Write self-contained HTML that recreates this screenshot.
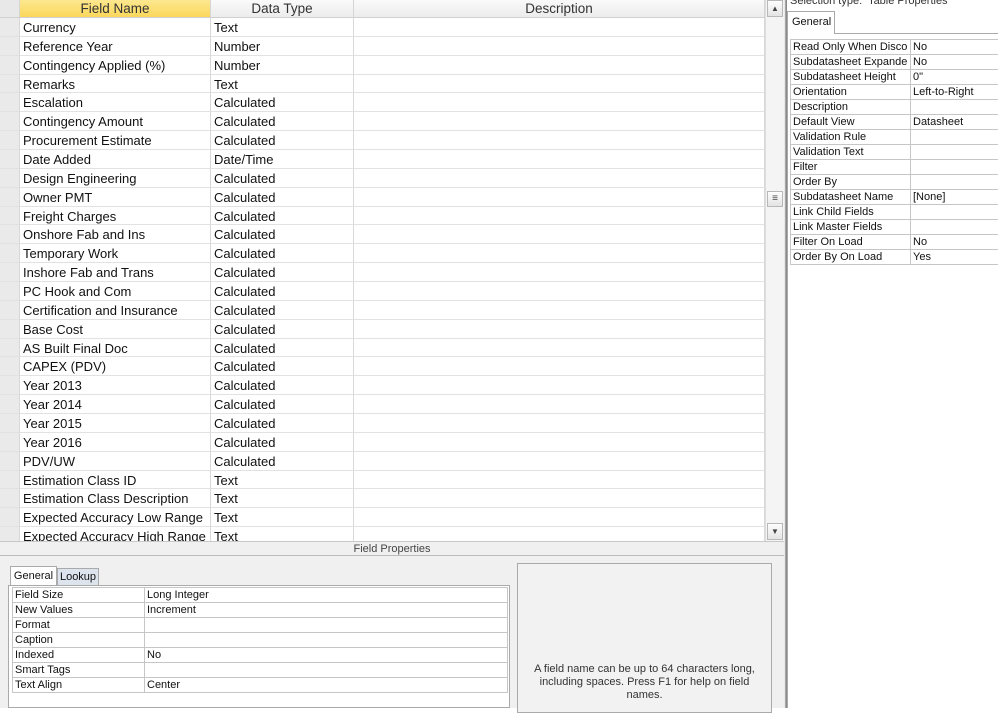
<!DOCTYPE html>
<html><head><meta charset="utf-8"><style>
*{margin:0;padding:0;box-sizing:border-box}
body{width:998px;height:708px;overflow:hidden;background:#fff;font-family:"Liberation Sans",sans-serif;position:relative;color:#111}
.a{position:absolute}
.grid{left:0;top:0;width:765px;height:541px;overflow:hidden}
.hdr{height:18px;display:flex;font-size:13.5px;color:#333;border-bottom:1px solid #d0d0d0}
.hdr div{text-align:center;line-height:18px;background:linear-gradient(#fafafa,#ececec);border-right:1px solid #d5d5d5}
.row{height:18.86px;display:flex;font-size:13px;line-height:20px}
.row div{border-right:1px solid #d8d8d8;border-bottom:1px solid #e2e2e2;padding-left:3px;white-space:nowrap;overflow:hidden}
.c0{width:20px;background:#eaeaea;padding:0!important}
.c1{width:191px}.c2{width:143px}.c3{width:411px}
.sb{left:765px;top:0;width:19px;height:541px;background:#f4f4f4;border-left:1px solid #ddd}
.btn{position:absolute;left:1px;width:16px;height:17px;background:linear-gradient(#fdfdfd,#e4e4e4);border:1px solid #b8b8b8;font-size:8px;text-align:center;line-height:15px;color:#444}
.sep{left:784px;top:0;width:3px;height:708px;background:#a8a8a8;border-left:1px solid #e8e8e8;border-right:1px solid #8a8a8a}
.pt td{border:1px solid #c6c6c6;font-size:11px;height:15px;line-height:14px;padding-left:2px;white-space:nowrap;overflow:hidden}
.pt{border-collapse:collapse;table-layout:fixed}
</style></head><body>
<div class="a grid">
<div class="hdr"><div style="width:20px;background:#e8e8e8"></div><div style="width:191px;background:linear-gradient(#fde88f,#fbd75b);color:#333">Field Name</div><div style="width:143px">Data Type</div><div style="width:411px">Description</div></div>
<div class="row"><div class="c0"></div><div class="c1">Currency</div><div class="c2">Text</div><div class="c3"></div></div>
<div class="row"><div class="c0"></div><div class="c1">Reference Year</div><div class="c2">Number</div><div class="c3"></div></div>
<div class="row"><div class="c0"></div><div class="c1">Contingency Applied (%)</div><div class="c2">Number</div><div class="c3"></div></div>
<div class="row"><div class="c0"></div><div class="c1">Remarks</div><div class="c2">Text</div><div class="c3"></div></div>
<div class="row"><div class="c0"></div><div class="c1">Escalation</div><div class="c2">Calculated</div><div class="c3"></div></div>
<div class="row"><div class="c0"></div><div class="c1">Contingency Amount</div><div class="c2">Calculated</div><div class="c3"></div></div>
<div class="row"><div class="c0"></div><div class="c1">Procurement Estimate</div><div class="c2">Calculated</div><div class="c3"></div></div>
<div class="row"><div class="c0"></div><div class="c1">Date Added</div><div class="c2">Date/Time</div><div class="c3"></div></div>
<div class="row"><div class="c0"></div><div class="c1">Design Engineering</div><div class="c2">Calculated</div><div class="c3"></div></div>
<div class="row"><div class="c0"></div><div class="c1">Owner PMT</div><div class="c2">Calculated</div><div class="c3"></div></div>
<div class="row"><div class="c0"></div><div class="c1">Freight Charges</div><div class="c2">Calculated</div><div class="c3"></div></div>
<div class="row"><div class="c0"></div><div class="c1">Onshore Fab and Ins</div><div class="c2">Calculated</div><div class="c3"></div></div>
<div class="row"><div class="c0"></div><div class="c1">Temporary Work</div><div class="c2">Calculated</div><div class="c3"></div></div>
<div class="row"><div class="c0"></div><div class="c1">Inshore Fab and Trans</div><div class="c2">Calculated</div><div class="c3"></div></div>
<div class="row"><div class="c0"></div><div class="c1">PC Hook and Com</div><div class="c2">Calculated</div><div class="c3"></div></div>
<div class="row"><div class="c0"></div><div class="c1">Certification and Insurance</div><div class="c2">Calculated</div><div class="c3"></div></div>
<div class="row"><div class="c0"></div><div class="c1">Base Cost</div><div class="c2">Calculated</div><div class="c3"></div></div>
<div class="row"><div class="c0"></div><div class="c1">AS Built Final Doc</div><div class="c2">Calculated</div><div class="c3"></div></div>
<div class="row"><div class="c0"></div><div class="c1">CAPEX (PDV)</div><div class="c2">Calculated</div><div class="c3"></div></div>
<div class="row"><div class="c0"></div><div class="c1">Year 2013</div><div class="c2">Calculated</div><div class="c3"></div></div>
<div class="row"><div class="c0"></div><div class="c1">Year 2014</div><div class="c2">Calculated</div><div class="c3"></div></div>
<div class="row"><div class="c0"></div><div class="c1">Year 2015</div><div class="c2">Calculated</div><div class="c3"></div></div>
<div class="row"><div class="c0"></div><div class="c1">Year 2016</div><div class="c2">Calculated</div><div class="c3"></div></div>
<div class="row"><div class="c0"></div><div class="c1">PDV/UW</div><div class="c2">Calculated</div><div class="c3"></div></div>
<div class="row"><div class="c0"></div><div class="c1">Estimation Class ID</div><div class="c2">Text</div><div class="c3"></div></div>
<div class="row"><div class="c0"></div><div class="c1">Estimation Class Description</div><div class="c2">Text</div><div class="c3"></div></div>
<div class="row"><div class="c0"></div><div class="c1">Expected Accuracy Low Range</div><div class="c2">Text</div><div class="c3"></div></div>
<div class="row"><div class="c0"></div><div class="c1">Expected Accuracy High Range</div><div class="c2">Text</div><div class="c3"></div></div>
</div>
<div class="a sb"><div class="btn" style="top:0">&#9650;</div><div class="btn" style="top:191px;height:16px;line-height:13px;font-size:10px">&#8801;</div><div class="btn" style="top:523px">&#9660;</div></div>
<div class="a" style="left:0;top:541px;width:784px;height:167px;background:#f0f0f0;border-top:1px solid #c8c8c8"></div>
<div class="a" style="left:0;top:541px;width:784px;height:15px;font-size:11px;text-align:center;line-height:16px;color:#444;border-bottom:1px solid #bbb">Field Properties</div>
<div class="a" style="left:10px;top:566px;width:47px;height:20px;background:#fff;border:1px solid #aaa;border-bottom:none;font-size:11px;line-height:18px;text-align:center">General</div>
<div class="a" style="left:57px;top:568px;width:42px;height:17px;background:#dde4ee;border:1px solid #aaa;border-bottom:none;font-size:11px;line-height:16px;text-align:center">Lookup</div>
<div class="a" style="left:8px;top:585px;width:502px;height:123px;background:#fff;border:1px solid #aaa"></div>
<table class="a pt" style="left:12px;top:587px;width:496px"><colgroup><col style="width:132px"><col></colgroup>
<tr><td>Field Size</td><td>Long Integer</td></tr><tr><td>New Values</td><td>Increment</td></tr><tr><td>Format</td><td></td></tr><tr><td>Caption</td><td></td></tr><tr><td>Indexed</td><td>No</td></tr><tr><td>Smart Tags</td><td></td></tr><tr><td>Text Align</td><td>Center</td></tr></table>
<div class="a" style="left:517px;top:563px;width:255px;height:150px;border:1px solid #aaa;background:#f2f2f2"></div>
<div class="a" style="left:525px;top:663px;width:239px;font-size:11px;line-height:13px;text-align:center;color:#333">A field name can be up to 64 characters long, including spaces. Press F1 for help on field names.</div>
<div class="a sep"></div>
<div class="a" style="left:788px;top:0;width:210px;height:708px;background:#fff"></div>
<div class="a" style="left:790px;top:-5px;font-size:11px;color:#333">Selection type:&nbsp; Table Properties</div>
<div class="a" style="left:787px;top:11px;width:48px;height:23px;background:#fff;border:1px solid #aaa;border-bottom:none;font-size:11px;line-height:20px;padding-left:4px;z-index:2">General</div>
<div class="a" style="left:787px;top:33px;width:211px;height:675px;border-top:1px solid #aaa;border-left:1px solid #aaa"></div>
<table class="a pt" style="left:790px;top:39px;width:210px"><colgroup><col style="width:120px"><col></colgroup>
<tr><td>Read Only When Disco</td><td>No</td></tr><tr><td>Subdatasheet Expande</td><td>No</td></tr><tr><td>Subdatasheet Height</td><td>0"</td></tr><tr><td>Orientation</td><td>Left-to-Right</td></tr><tr><td>Description</td><td></td></tr><tr><td>Default View</td><td>Datasheet</td></tr><tr><td>Validation Rule</td><td></td></tr><tr><td>Validation Text</td><td></td></tr><tr><td>Filter</td><td></td></tr><tr><td>Order By</td><td></td></tr><tr><td>Subdatasheet Name</td><td>[None]</td></tr><tr><td>Link Child Fields</td><td></td></tr><tr><td>Link Master Fields</td><td></td></tr><tr><td>Filter On Load</td><td>No</td></tr><tr><td>Order By On Load</td><td>Yes</td></tr></table>
</body></html>
